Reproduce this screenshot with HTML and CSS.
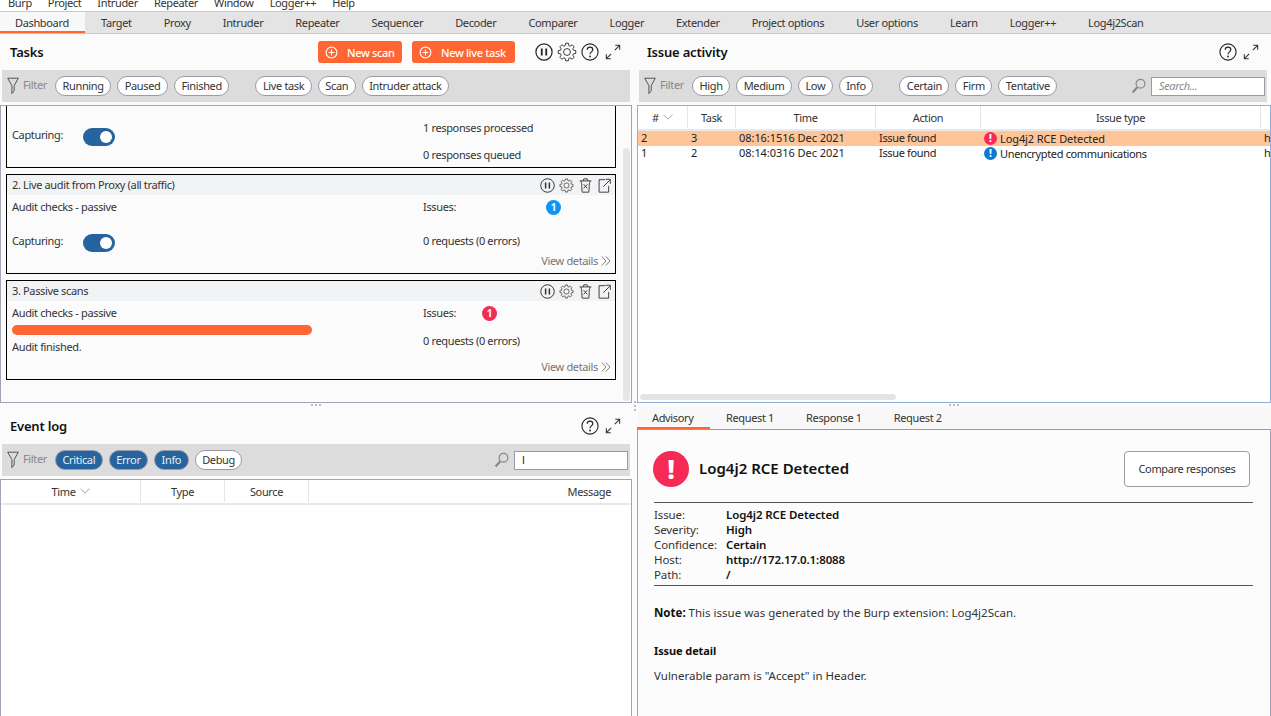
FILE: index.html
```html
<!DOCTYPE html>
<html lang="en">
<head>
<meta charset="utf-8">
<title>Burp Suite</title>
<link rel="stylesheet" href="styles.css">
</head>
<body>
<svg class="defs" width="0" height="0" aria-hidden="true">
  <symbol id="i-pause" viewBox="0 0 20 20"><circle cx="10" cy="10" r="9" fill="none" stroke="currentColor" stroke-width="1.3"/><path d="M7.5 6v8M12.5 6v8" stroke="currentColor" stroke-width="2" fill="none"/></symbol>
  <symbol id="i-gear" viewBox="-10.5 -10.5 21 21"><path fill="none" stroke="currentColor" stroke-width="1" stroke-linejoin="round" d="M6.73 -1.93L9.19 -1.45L9.19 1.45L6.73 1.93L6.12 3.39L7.52 5.47L5.47 7.52L3.39 6.12L1.93 6.73L1.45 9.19L-1.45 9.19L-1.93 6.73L-3.39 6.12L-5.47 7.52L-7.52 5.47L-6.12 3.39L-6.73 1.93L-9.19 1.45L-9.19 -1.45L-6.73 -1.93L-6.12 -3.39L-7.52 -5.47L-5.47 -7.52L-3.39 -6.12L-1.93 -6.73L-1.45 -9.19L1.45 -9.19L1.93 -6.73L3.39 -6.12L5.47 -7.52L7.52 -5.47L6.12 -3.39Z"/><circle r="3.6" fill="none" stroke="currentColor" stroke-width="1"/></symbol>
  <symbol id="i-help" viewBox="0 0 20 20"><circle cx="10" cy="10" r="9" fill="none" stroke="currentColor" stroke-width="1.2"/><path d="M6.9 7.6C6.9 5.6 8.3 4.6 10 4.6c1.8 0 3.1 1.1 3.1 2.8 0 2.4-3.1 2.5-3.1 5.1" fill="none" stroke="currentColor" stroke-width="1.3"/><circle cx="10" cy="15" r="1" fill="currentColor"/></symbol>
  <symbol id="i-expand" viewBox="0 0 18 18"><path d="M1.5 16.5L7 11M11 7L16.5 1.5M1.5 11.5v5h5M11.5 1.5h5v5" fill="none" stroke="currentColor" stroke-width="1.2"/></symbol>
  <symbol id="i-trash" viewBox="0 0 16 18"><path d="M1 3.5h14M5 3.5L6 1h4l1 2.5M2.5 3.5c.8 3 1.2 4 1 7l.5 6.5h8l.5-6.5c-.2-3 .2-4 1-7M5.8 7.5l4.4 5M10.2 7.5l-4.4 5" fill="none" stroke="currentColor" stroke-width="1.1"/></symbol>
  <symbol id="i-open" viewBox="0 0 16 18"><path d="M9 2H1.5v15H13V9.5M6.5 10.5L14.5 2.5M9.5 1.5h5.5v5.5" fill="none" stroke="currentColor" stroke-width="1.1"/></symbol>
  <symbol id="i-funnel" viewBox="0 0 12 18"><path d="M.7 1.2h10.6L7.2 8.6v5.2L4.9 16.6V8.6Z" fill="none" stroke="currentColor" stroke-width="1"/></symbol>
  <symbol id="i-search" viewBox="0 0 15 16"><circle cx="9.5" cy="5.7" r="4.4" fill="none" stroke="currentColor" stroke-width="1.2"/><path d="M6.3 9.2L1.6 14.4" stroke="currentColor" stroke-width="2.2" fill="none"/></symbol>
  <symbol id="i-chev" viewBox="0 0 10 6"><path d="M.5.8L5 5.2 9.5.8" fill="none" stroke="currentColor" stroke-width=".9"/></symbol>
  <symbol id="i-dchev" viewBox="0 0 10 10"><path d="M.8.5L5 5 .8 9.5M4.8.5L9 5 4.8 9.5" fill="none" stroke="currentColor" stroke-width=".9"/></symbol>
  <symbol id="i-plus" viewBox="0 0 14 14"><circle cx="7" cy="7" r="5.8" fill="none" stroke="currentColor" stroke-width="1.2"/><path d="M7 3.8v6.4M3.8 7h6.4" stroke="currentColor" stroke-width="1.2" fill="none"/></symbol>
</svg>

<div class="app">
  <div class="menu">
    <span class="menu-item">Burp</span><span class="menu-item">Project</span><span class="menu-item">Intruder</span><span class="menu-item">Repeater</span><span class="menu-item">Window</span><span class="menu-item">Logger++</span><span class="menu-item">Help</span>
  </div>
  <div class="tabs">
    <div class="tab active">Dashboard</div><div class="tab">Target</div><div class="tab">Proxy</div><div class="tab">Intruder</div><div class="tab">Repeater</div><div class="tab">Sequencer</div><div class="tab">Decoder</div><div class="tab">Comparer</div><div class="tab">Logger</div><div class="tab">Extender</div><div class="tab">Project options</div><div class="tab">User options</div><div class="tab">Learn</div><div class="tab">Logger++</div><div class="tab">Log4j2Scan</div>
  </div>

  <div class="panes">
    <div class="col col-left">
      <section class="tasks">
        <header class="head head-tasks">
          <h2 class="title">Tasks</h2>
          <button class="btn btn-scan"><svg class="ic13"><use href="#i-plus"/></svg><span>New scan</span></button>
          <button class="btn btn-live"><svg class="ic13"><use href="#i-plus"/></svg><span>New live task</span></button>
          <svg class="ic18 first"><use href="#i-pause"/></svg>
          <svg class="ic19"><use href="#i-gear"/></svg>
          <svg class="ic18"><use href="#i-help"/></svg>
          <svg class="ic16"><use href="#i-expand"/></svg>
        </header>
        <div class="filter">
          <svg class="funnel"><use href="#i-funnel"/></svg><span class="filter-label">Filter</span>
          <span class="pill">Running</span><span class="pill">Paused</span><span class="pill">Finished</span>
          <span class="pill group">Live task</span><span class="pill">Scan</span><span class="pill">Intruder attack</span>
        </div>
        <div class="task-box">
          <div class="task-scroll">
            <article class="card card-cut">
              <div class="body body-cut">
                <div class="left pad-cut">
                  <div class="line cap"><span class="cap-label">Capturing:</span><span class="toggle"></span></div>
                </div>
                <div class="right pad-cut-r">
                  <div class="line">1 responses processed</div>
                  <div class="line gap7">0 responses queued</div>
                </div>
              </div>
            </article>
            <article class="card">
              <div class="card-head"><span>2. Live audit from Proxy (all traffic)</span><span class="card-tools"><svg class="ict"><use href="#i-pause"/></svg><svg class="ict"><use href="#i-gear"/></svg><svg class="ict"><use href="#i-trash"/></svg><svg class="ict"><use href="#i-open"/></svg></span></div>
              <div class="body body-2">
                <div class="left">
                  <div class="line">Audit checks - passive</div>
                  <div class="line cap gap14"><span class="cap-label">Capturing:</span><span class="toggle"></span></div>
                </div>
                <div class="right">
                  <div class="line issues"><span>Issues:</span><span class="badge blue">1</span></div>
                  <div class="line gap14">0 requests (0 errors)</div>
                  <div class="line details">View details <svg class="dchev"><use href="#i-dchev"/></svg></div>
                </div>
              </div>
            </article>
            <article class="card">
              <div class="card-head"><span>3. Passive scans</span><span class="card-tools"><svg class="ict"><use href="#i-pause"/></svg><svg class="ict"><use href="#i-gear"/></svg><svg class="ict"><use href="#i-trash"/></svg><svg class="ict"><use href="#i-open"/></svg></span></div>
              <div class="body body-3">
                <div class="left">
                  <div class="line">Audit checks - passive</div>
                  <div class="progress"></div>
                  <div class="line">Audit finished.</div>
                </div>
                <div class="right">
                  <div class="line issues"><span>Issues:</span><span class="badge red">1</span></div>
                  <div class="line gap8">0 requests (0 errors)</div>
                  <div class="line details gap6">View details <svg class="dchev"><use href="#i-dchev"/></svg></div>
                </div>
              </div>
            </article>
          </div>
          <div class="vscroll"></div>
        </div>
      </section>
      <div class="dots-h"><i></i><i></i><i></i></div>
      <section class="log">
        <header class="head head-log">
          <h2 class="title">Event log</h2>
          <svg class="ic18 push"><use href="#i-help"/></svg>
          <svg class="ic16"><use href="#i-expand"/></svg>
        </header>
        <div class="filter">
          <svg class="funnel"><use href="#i-funnel"/></svg><span class="filter-label">Filter</span>
          <span class="pill on">Critical</span><span class="pill on">Error</span><span class="pill on">Info</span><span class="pill">Debug</span>
          <svg class="search"><use href="#i-search"/></svg><span class="input input-text">l</span>
        </div>
        <div class="log-table">
          <div class="thead log-cols">
            <div class="th">Time <svg class="chev"><use href="#i-chev"/></svg></div><div class="th">Type</div><div class="th">Source</div><div class="th th-msg">Message</div>
          </div>
        </div>
      </section>
    </div>

    <div class="dots-v"><i></i><i></i><i></i></div>

    <div class="col col-right">
      <section class="issues-pane">
        <header class="head head-issues">
          <h2 class="title">Issue activity</h2>
          <svg class="ic18 push"><use href="#i-help"/></svg>
          <svg class="ic16"><use href="#i-expand"/></svg>
        </header>
        <div class="filter">
          <svg class="funnel"><use href="#i-funnel"/></svg><span class="filter-label">Filter</span>
          <span class="pill">High</span><span class="pill">Medium</span><span class="pill">Low</span><span class="pill">Info</span>
          <span class="pill group">Certain</span><span class="pill">Firm</span><span class="pill">Tentative</span>
          <svg class="search"><use href="#i-search"/></svg><span class="input input-ph">Search...</span>
        </div>
        <div class="issue-table">
          <div class="thead issue-cols">
            <div class="th"># <svg class="chev"><use href="#i-chev"/></svg></div><div class="th">Task</div><div class="th">Time</div><div class="th">Action</div><div class="th">Issue type</div><div class="th th-end"></div>
          </div>
          <div class="tr issue-cols sel"><div>2</div><div>3</div><div class="num">08:16:1516 Dec 2021</div><div>Issue found</div><div class="itype"><span class="dot dot-red">!</span><span class="tight">Log4j2 RCE Detected</span></div><div>h</div></div>
          <div class="tr issue-cols"><div>1</div><div>2</div><div class="num">08:14:0316 Dec 2021</div><div>Issue found</div><div class="itype"><span class="dot dot-blue">!</span>Unencrypted communications</div><div>h</div></div>
          <div class="hscroll"></div>
        </div>
      </section>
      <div class="dots-h dots-r"><i></i><i></i><i></i></div>
      <section class="advisory">
        <div class="adv-tabs">
          <div class="adv-tab active">Advisory</div><div class="adv-tab">Request 1</div><div class="adv-tab">Response 1</div><div class="adv-tab">Request 2</div>
        </div>
        <div class="adv-body">
          <div class="adv-inner">
            <div class="adv-head">
              <span class="big-dot">!</span>
              <h1 class="adv-title">Log4j2 RCE Detected</h1>
              <button class="compare">Compare responses</button>
            </div>
            <dl class="meta">
              <dt>Issue:</dt><dd>Log4j2 RCE Detected</dd>
              <dt>Severity:</dt><dd>High</dd>
              <dt>Confidence:</dt><dd>Certain</dd>
              <dt>Host:</dt><dd>http://172.17.0.1:8088</dd>
              <dt>Path:</dt><dd>/</dd>
            </dl>
            <p class="note"><b>Note:</b> This issue was generated by the Burp extension: Log4j2Scan.</p>
            <h3 class="detail-h">Issue detail</h3>
            <p class="detail">Vulnerable param is "Accept" in Header.</p>
          </div>
        </div>
      </section>
    </div>
  </div>
</div>
</body>
</html>
```

FILE: styles.css
```css
* { box-sizing: border-box; }
html, body { margin: 0; padding: 0; height: 716px; overflow: hidden; background: #fff; }
body { font-family: "Noto Sans", sans-serif; font-size: 11px; letter-spacing: -0.35px; color: #222; }
.defs { display: block; height: 0; }
svg { display: block; flex: none; }

.app { width: 1271px; height: 716px; display: flex; flex-direction: column; overflow: hidden; }

.menu { height: 12px; padding-left: 8px; display: flex; gap: 16px; line-height: 1; overflow: hidden; border-bottom: 1px solid #c9c9c9; font-size: 11px; }
.menu-item { margin-top: -3px; color: #333; }

.tabs { height: 22px; display: flex; background: #e4e4e4; border-bottom: 1px solid #c9c9c9; flex: none; }
.tab { padding: 0 16px; line-height: 21px; color: #333; }
.tab.active { background: #f8f8f8; box-shadow: inset 0 -2px 0 #ff6633; width: 85px; padding-left: 15px; }

.panes { flex: 1; display: flex; min-height: 0; background: #fbfbfb; }
.col { display: flex; flex-direction: column; min-height: 0; }
.col-left { width: 632px; flex: none; }
.col-right { width: 634px; flex: none; }

.dots-v { width: 5px; flex: none; display: flex; flex-direction: column; gap: 2px; align-items: center; justify-content: flex-start; padding-top: 367px; }
.dots-v i, .dots-h i { width: 2px; height: 2px; background: #a6a6ac; border-radius: 50%; display: block; }
.dots-h { height: 4px; flex: none; display: flex; gap: 2px; justify-content: center; align-items: center; }

.head { height: 36px; display: flex; align-items: center; padding: 0 11px 0 10px; flex: none; }
.head-log { height: 37px; }
.head-issues { padding-right: 12px; }
.title { margin: 0; font-size: 13px; font-weight: 600; letter-spacing: -0.2px; color: #111; margin-right: auto; }
.push { margin-left: auto; }
.ic13 { width: 13px; height: 13px; color: #fff; }
.ic16 { width: 16px; height: 16px; color: #333; margin-left: 6px; }
.ic18 { width: 18px; height: 18px; color: #222; }
.ic19 { width: 20px; height: 20px; color: #333; margin: 0 4px 0 4px; }
.first { margin-left: 20px; }

.btn { height: 22px; border: 0; border-radius: 3px; background: #ff6633; color: #fff; font: 500 11px "Noto Sans", sans-serif; letter-spacing: -0.35px; display: flex; align-items: center; padding: 0 0 0 7px; gap: 9px; }
.btn-scan { width: 84px; }
.btn-live { width: 103px; margin-left: 10px; }

.filter { height: 32px; margin: 0 2px; background: #dcdcdc; display: flex; align-items: center; padding-left: 5px; flex: none; width: 628px; }
.funnel { width: 12px; height: 18px; color: #555; }
.filter-label { color: #888; margin-left: 4px; width: 32px; line-height: 18px; margin-top: -2px; }
.pill { height: 20px; line-height: 18px; padding: 0 6.5px; border: 1px solid #9b9ba8; border-radius: 10px; background: #fff; color: #333; margin-right: 6px; }
.pill.group { margin-left: 20px; }
.pill.on { background: #26649f; color: #e8eef6; }
.search { width: 15px; height: 16px; color: #888; margin-left: auto; margin-right: 5px; }
.input { width: 114px; height: 19px; border: 1px solid #9b9ba8; background: #fff; line-height: 16px; padding-left: 7px; margin-right: 2px; }
.input-ph { font-style: italic; color: #888; }

.tasks { height: 369px; display: flex; flex-direction: column; flex: none; }
.task-box { flex: 1; margin-top: 3px; border: 1px solid #a3a3b5; display: flex; min-height: 0; background: #fbfbfb; overflow: hidden; }
.task-scroll { flex: none; width: 622px; display: flex; flex-direction: column; gap: 6px; padding-left: 5px; }
.vscroll { width: 7px; margin: 42px 0 1px 0; background: #e6e6e6; border-radius: 4px; flex: none; }

.card { width: 610px; border: 1px solid #000; flex: none; }
.card-cut { border-top: 0; height: 62px; }
.card-head { height: 20px; background: #f2f3f5; display: flex; justify-content: space-between; align-items: center; padding: 0 3px 0 5px; color: #333; }
.card-head > span:first-child { margin-top: -2px; }
.card-tools { display: flex; align-items: center; gap: 4px; }
.ict { width: 15px; height: 15px; color: #333; }
.body { display: flex; }
.body-2 { height: 78px; padding-top: 2px; }
.body-3 { height: 78px; padding-top: 2px; }
.left { width: 416px; padding-left: 5px; flex: none; }
.right { flex: 1; padding-right: 4px; }
.pad-cut { padding-top: 19px; }
.pad-cut-r { padding-top: 12px; }
.line { height: 20px; line-height: 20px; color: #333; }
.gap7 { margin-top: 7px; }
.gap14 { margin-top: 14px; }
.gap8 { margin-top: 8px; }
.gap6 { margin-top: 6px; }
.cap { display: flex; align-items: center; }
.cap-label { width: 71px; }
.toggle { width: 32px; height: 18px; border-radius: 9px; background: #26649f; position: relative; margin-top: 4px; }
.toggle::after { content: ""; position: absolute; right: 3px; top: 3px; width: 12px; height: 12px; border-radius: 50%; background: #fff; }
.issues { display: flex; align-items: center; }
.badge { width: 15px; height: 15px; border-radius: 50%; color: #fff; font-size: 10px; font-weight: 700; line-height: 15px; text-align: center; letter-spacing: 0; }
.badge.blue { background: #0a96f5; margin-left: 90px; margin-top: 1px; }
.badge.red { background: #f52a55; margin-left: 26px; margin-top: 1px; }
.details { display: flex; justify-content: flex-end; align-items: center; gap: 3px; color: #7a7474; }
.dchev { width: 10px; height: 10px; }
.progress { height: 10px; width: 300px; background: #ff6633; border-radius: 5px; margin-top: 2px; margin-bottom: 2px; }

.log { flex: 1; display: flex; flex-direction: column; min-height: 0; }
.log-table { flex: 1; margin-top: 3px; border: 1px solid #a3a3b5; border-bottom: 0; background: #fff; }
.thead { display: grid; border-bottom: 2px solid #e8e8ea; height: 25px; background: #fff; flex: none; }
.th { display: flex; align-items: center; justify-content: center; gap: 4px; border-right: 1px solid #e6e6e6; height: 22px; color: #333; }
.th-msg { justify-content: flex-end; border-right: 0; padding-right: 20px; }
.th-end { border-right: 0; }
.log-cols { grid-template-columns: 140px 84px 84px 1fr; }
.chev { width: 10px; height: 6px; color: #999; }

.issues-pane { height: 369px; flex: none; display: flex; flex-direction: column; }
.issue-table { flex: 1; margin-top: 3px; border: 1px solid #8fb0d8; background: #fff; display: flex; flex-direction: column; overflow: hidden; }
.issue-cols { display: grid; grid-template-columns: 50px 48px 140px 105px 280px 1fr; }
.tr { height: 15px; flex: none; line-height: 14px; color: #222; white-space: nowrap; overflow: hidden; }
.tr > div { padding-left: 3px; overflow: hidden; }
.num { letter-spacing: -0.05px; }
.tight { letter-spacing: -0.1px; }
.sel { background: #ffc599; }
.itype { display: flex; align-items: center; gap: 3px; }
.dot { width: 13px; height: 13px; border-radius: 50%; color: #fff; font-weight: 800; font-size: 10px; line-height: 13px; text-align: center; flex: none; letter-spacing: 0; }
.dot-red { background: #f52a55; }
.dot-blue { background: #0a7ad5; }
.hscroll { width: 256px; height: 6px; flex: none; background: #e4e4e4; border-radius: 3px; margin: auto 0 2px 2px; }

.advisory { flex: 1; display: flex; flex-direction: column; min-height: 0; }
.adv-tabs { height: 23px; display: flex; flex: none; border-bottom: 1px solid #9a9aa6; background: #f8f8f8; }
.adv-tab { padding: 0 16px; line-height: 22px; color: #333; }
.adv-tab.active { width: 73px; padding-left: 15px; box-shadow: inset 0 -2px 0 #ff6633; }
.adv-body { flex: 1; border-left: 1px solid #a3a3b5; border-right: 1px solid #a3a3b5; background: #fbfbfb; padding: 0 11px 0 10px; min-height: 0; }
.adv-inner { height: 100%; background: #fcfcfc; padding: 20px 6px 0 6px; }
.adv-head { height: 37px; display: flex; align-items: center; margin-right: 3px; }
.big-dot { width: 36px; height: 36px; border-radius: 50%; background: #f52a55; color: #fff; font-size: 27px; font-weight: 800; line-height: 36px; text-align: center; margin-left: -1px; letter-spacing: 0; }
.adv-title { margin: -2px 0 0 10px; font-size: 15px; font-weight: 600; letter-spacing: 0; color: #111; flex: 1; }
.compare { width: 126px; height: 36px; border: 1px solid #9b9ba8; border-radius: 4px; background: #fff; color: #333; font: 11px "Noto Sans", sans-serif; letter-spacing: -0.35px; }
.meta { margin: 15px 0 0 0; padding: 4px 0 3px; font-size: 11.5px; border-top: 1px solid #555; border-bottom: 1px solid #555; display: grid; grid-template-columns: 72px 1fr; grid-auto-rows: 15px; line-height: 15px; letter-spacing: -0.1px; }
.meta dt { color: #333; }
.meta dd { margin: 0; font-weight: 600; color: #111; }
.note { margin: 19px 0 0; line-height: 16px; color: #333; font-size: 11.5px; letter-spacing: 0; }
.note b { font-weight: 700; color: #111; }
.detail-h { margin: 22px 0 0; font-size: 11px; font-weight: 700; line-height: 16px; color: #111; letter-spacing: -0.1px; }
.detail { margin: 9px 0 0; line-height: 16px; color: #333; font-size: 11.5px; letter-spacing: 0; }
```
